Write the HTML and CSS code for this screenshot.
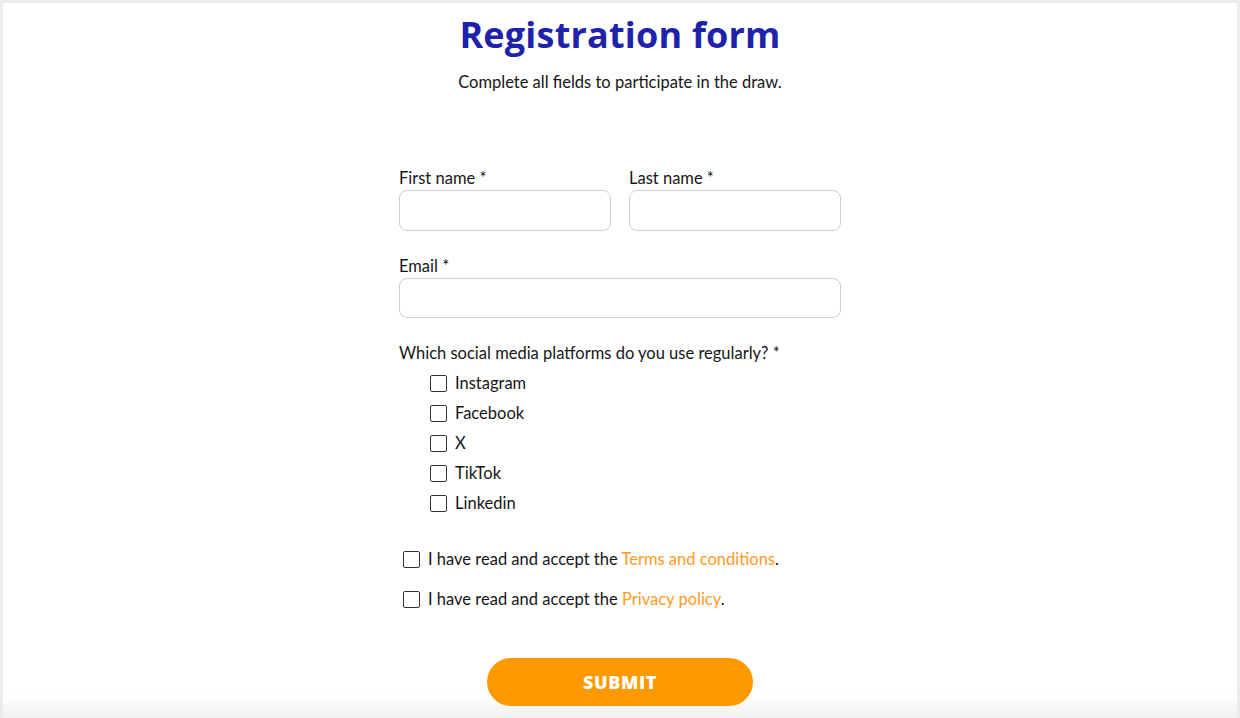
FILE: index.html
```html
<!DOCTYPE html>
<html lang="en">
<head>
<meta charset="utf-8">
<title>Registration form</title>
<link rel="stylesheet" href="styles.css">
</head>
<body>
<div class="page">
  <main class="form-wrap">
    <h1 class="title">Registration form</h1>
    <p class="subtitle">Complete all fields to participate in the draw.</p>
    <form class="form">
      <div class="row two">
        <div class="field">
          <label class="label">First name *</label>
          <input class="input" type="text">
        </div>
        <div class="field">
          <label class="label">Last name *</label>
          <input class="input" type="text">
        </div>
      </div>
      <div class="row">
        <div class="field">
          <label class="label">Email *</label>
          <input class="input email" type="email">
        </div>
      </div>
      <div class="group">
        <div class="label">Which social media platforms do you use regularly? *</div>
        <ul class="options">
          <li class="option"><span class="box"></span><span>Instagram</span></li>
          <li class="option"><span class="box"></span><span>Facebook</span></li>
          <li class="option"><span class="box"></span><span>X</span></li>
          <li class="option"><span class="box"></span><span>TikTok</span></li>
          <li class="option"><span class="box"></span><span>Linkedin</span></li>
        </ul>
      </div>
      <div class="consents">
        <div class="consent"><span class="box"></span><span>I have read and accept the <a class="link" href="#">Terms and conditions</a>.</span></div>
        <div class="consent"><span class="box"></span><span>I have read and accept the <a class="link" href="#">Privacy policy</a>.</span></div>
      </div>
      <div class="actions">
        <button class="submit" type="button">SUBMIT</button>
      </div>
    </form>
  </main>
</div>
</body>
</html>
```

FILE: styles.css
```css
* { box-sizing: border-box; }
html, body { margin: 0; padding: 0; }
body {
  background: #ececec;
  font-family: "Lato", "Open Sans", sans-serif;
  color: #161616;
  height: 718px;
  overflow: hidden;
}
.page {
  margin: 3px 3px 0 3px;
  height: 715px;
  background: linear-gradient(to bottom, #ffffff 0, #ffffff 690px, #f1f1f1 715px);
  display: flex;
  justify-content: center;
}
.form-wrap {
  width: 442px;
  display: flex;
  flex-direction: column;
}
.title {
  margin: 10px 0 0 0;
  text-align: center;
  font-family: "Open Sans", sans-serif;
  font-weight: 700;
  font-size: 36px;
  line-height: 44px;
  color: #1f22ab;
  letter-spacing: 0.2px;
}
.subtitle {
  margin: 15px 0 0 0;
  text-align: center;
  font-size: 16.5px;
  line-height: 20px;
}
.form {
  margin-top: 76px;
  display: flex;
  flex-direction: column;
}
.row { display: flex; gap: 18px; margin-bottom: 25px; }
.row .field { flex: 1; display: flex; flex-direction: column; }
.label {
  font-size: 16.5px;
  line-height: 20px;
  margin-bottom: 2px;
}
.input {
  height: 41px;
  border: 1px solid #cfcfcf;
  border-radius: 8px;
  background: #fff;
  font: inherit;
}
.input.email { height: 40px; }
.options {
  list-style: none;
  margin: 10px 0 0 31px;
  padding: 0;
  display: flex;
  flex-direction: column;
  gap: 10px;
}
.option, .consent {
  display: flex;
  align-items: center;
  gap: 8px;
  font-size: 16.5px;
  line-height: 20px;
}
.box {
  width: 17px;
  height: 17px;
  border: 1.5px solid #333;
  border-radius: 2px;
  flex: none;
  background: #fff;
}
.consents {
  margin: 36px 0 0 4px;
  display: flex;
  flex-direction: column;
  gap: 20px;
}
.link { color: #ff9a1f; text-decoration: none; }
.actions {
  display: flex;
  justify-content: center;
  margin-top: 49px;
}
.submit {
  width: 266px;
  height: 48px;
  border: none;
  border-radius: 24px;
  background: #ff9900;
  color: #fff;
  font-family: "Open Sans", sans-serif;
  font-weight: 800;
  font-size: 18px;
  letter-spacing: 0.6px;
}
```
